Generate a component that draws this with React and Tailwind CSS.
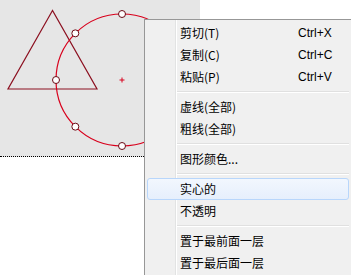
import React from "react";

const items = [
  { label: "剪切(T)", shortcut: "Ctrl+X" },
  { label: "复制(C)", shortcut: "Ctrl+C" },
  { label: "粘贴(P)", shortcut: "Ctrl+V" },
  { sep: true },
  { label: "虚线(全部)" },
  { label: "粗线(全部)" },
  { sep: true },
  { label: "图形颜色..." },
  { sep: true },
  { label: "实心的", active: true },
  { label: "不透明" },
  { sep: true },
  { label: "置于最前面一层" },
  { label: "置于最后面一层" },
];

function Canvas() {
  const cx = 122, cy = 80, r = 66;
  const d = r * Math.SQRT1_2;
  const handles = [
    [cx, cy - r], [cx - d, cy - d], [cx - r, cy], [cx - d, cy + d],
    [cx, cy + r], [cx + d, cy + d], [cx + r, cy], [cx + d, cy - d],
  ];
  return (
    <div className="w-[200px] h-[157px] bg-[#e6e6e6] border-b border-dotted border-black">
      <svg width="200" height="156" viewBox="0 0 200 156">
        <polygon points="52.5,10.5 8,89 97,89" fill="none" stroke="#8c1020" strokeWidth="1.2" />
        <circle cx={cx} cy={cy} r={r} fill="none" stroke="#d8001c" strokeWidth="1.2" />
        <line x1={cx - 2.5} y1={cy} x2={cx + 2.5} y2={cy} stroke="#d8001c" strokeWidth="1" />
        <line x1={cx} y1={cy - 2.5} x2={cx} y2={cy + 2.5} stroke="#d8001c" strokeWidth="1" />
        {handles.map(([x, y], i) => (
          <circle key={i} cx={x} cy={y} r="3.5" fill="#ffffff" stroke="#6a0a14" strokeWidth="1" />
        ))}
      </svg>
    </div>
  );
}

function Menu() {
  return (
    <div className="absolute left-[144px] top-[19px] w-[208px] border border-[#979797] bg-[linear-gradient(to_right,#f0f0f0_30px,#e2e3e3_30px,#e2e3e3_31px,#ffffff_31px,#ffffff_32px,#f0f0f0_32px)] p-[2px] text-[12px] text-black font-['Noto_Sans_CJK_SC','Microsoft_YaHei',sans-serif]">
      {items.map((it, i) =>
        it.sep ? (
          <div key={i} className="h-[8px] flex flex-col justify-center pl-[30px]">
            <div className="h-px bg-[#e0e0e0]" />
            <div className="h-px bg-white" />
          </div>
        ) : (
          <div
            key={i}
            className={
              "h-[22px] flex items-center pl-[32px] leading-none " +
              (it.active
                ? "rounded-[3px] border border-[#b8d6fb] bg-[linear-gradient(to_bottom,#f2f7fe,#e6effc)]"
                : "border border-transparent")
            }
          >
            <span className="w-[118px] whitespace-nowrap">{it.label}</span>
            {it.shortcut && (
              <span className="whitespace-nowrap font-['Liberation_Sans',sans-serif]">{it.shortcut}</span>
            )}
          </div>
        )
      )}
    </div>
  );
}

export default function App() {
  return (
    <div className="relative w-[351px] h-[275px] overflow-hidden bg-white">
      <Canvas />
      <Menu />
    </div>
  );
}
